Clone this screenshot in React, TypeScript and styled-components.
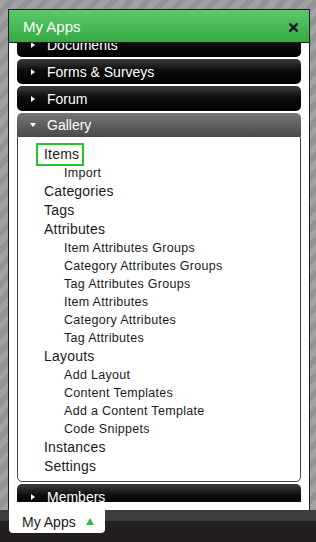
import React, { useLayoutEffect, useRef } from 'react';
import styled, { createGlobalStyle, css } from 'styled-components';

const GlobalStyle = createGlobalStyle`
  html, body {
    margin: 0;
    padding: 0;
    height: 100%;
  }
  body {
    background: repeating-linear-gradient(135deg, #a2a2a2 0 6px, #939393 6px 12px);
    font-family: 'Liberation Sans', Arial, sans-serif;
  }
  #root {
    height: 100%;
  }
`;

const Screen = styled.div`
  height: 100%;
  display: flex;
  flex-direction: column;
`;

const Stage = styled.div`
  flex: 1;
  min-height: 0;
  display: flex;
  padding: 9px 6px 0 8px;
`;

const Panel = styled.section`
  flex: 1;
  min-height: 0;
  display: flex;
  flex-direction: column;
  background: #fff;
  border: 1px solid #1e1e1e;
  border-bottom: none;
`;

const Header = styled.header`
  height: 32px;
  flex-shrink: 0;
  display: flex;
  align-items: center;
  justify-content: space-between;
  padding: 0 11px 0 14px;
  background: linear-gradient(#5dc86d, #35a944);
  border-bottom: 1px solid #1e1e1e;
  color: #fff;
  font-size: 15px;
`;

const Close = styled.button`
  display: flex;
  padding: 0;
  margin-top: 2px;
  border: none;
  background: none;
  color: #1b1b1b;
`;

const Viewport = styled.div`
  flex: 1;
  min-height: 0;
  overflow: hidden;
  padding: 0 8px;
`;

const Sections = styled.div`
  display: flex;
  flex-direction: column;
  gap: 2px;
`;

const Spacer = styled.div`
  height: 8px;
  flex-shrink: 0;
`;

const Bar = styled.div<{ $open?: boolean }>`
  height: ${p => (p.$open ? 23 : 25)}px;
  display: flex;
  align-items: center;
  gap: 10px;
  padding-left: 12px;
  border-radius: ${p => (p.$open ? '5px 5px 0 0' : '5px')};
  background: ${p =>
    p.$open
      ? 'linear-gradient(#767676, #4b4b4b)'
      : 'linear-gradient(#3e3e3e, #0d0d0d 45%, #000)'};
  color: #fff;
  font-size: 14px;
`;

const Arrow = styled.span<{ $open?: boolean }>`
  width: 8px;
  height: 8px;
  display: flex;
  align-items: center;
  justify-content: center;
  &::before {
    content: '';
    border-style: solid;
    border-color: transparent;
    ${p =>
      p.$open
        ? css`
            border-width: 4px 3.5px 0 3.5px;
            border-top-color: #fff;
          `
        : css`
            border-width: 3.5px 0 3.5px 4px;
            border-left-color: #fff;
          `}
  }
`;

const Drawer = styled.ul`
  list-style: none;
  margin: 0;
  padding: 8px 0 5px;
  border: 1px solid #474747;
  border-radius: 0 0 5px 5px;
  color: #1a1a1a;
`;

const Entry = styled.li<{ $sub?: boolean }>`
  padding-left: ${p => (p.$sub ? 46 : 26)}px;
  font-size: ${p => (p.$sub ? 12.5 : 14)}px;
  line-height: ${p => (p.$sub ? 18 : 19)}px;
  letter-spacing: ${p => (p.$sub ? 0.3 : 0.2)}px;
  white-space: nowrap;
`;

const Label = styled.span<{ $selected?: boolean }>`
  ${p =>
    p.$selected &&
    css`
      display: inline-block;
      vertical-align: top;
      margin-left: -6px;
      padding: 0 3px 0 6px;
      outline: 2px solid #2cc12a;
    `}
`;

const Taskbar = styled.footer`
  height: 32px;
  flex-shrink: 0;
  padding-left: 9px;
  background: linear-gradient(#3d3d3d 0 11px, #231f20 11px);
`;

const Tab = styled.button`
  width: 96px;
  height: 23px;
  display: flex;
  align-items: center;
  gap: 10px;
  padding: 0 0 0 13px;
  border: none;
  border-radius: 0 0 4px 4px;
  background: #fff;
  color: #1c1c1c;
  font: 14px 'Liberation Sans', Arial, sans-serif;
`;

const UpArrow = styled.span`
  width: 0;
  height: 0;
  border-style: solid;
  border-color: transparent transparent #3bb54a transparent;
  border-width: 0 4px 7px 4px;
`;

const closedBefore = ['Documents', 'Forms & Surveys', 'Forum'];
const closedAfter = ['Members'];

const galleryLinks: { label: string; sub?: boolean; selected?: boolean }[] = [
  { label: 'Items', selected: true },
  { label: 'Import', sub: true },
  { label: 'Categories' },
  { label: 'Tags' },
  { label: 'Attributes' },
  { label: 'Item Attributes Groups', sub: true },
  { label: 'Category Attributes Groups', sub: true },
  { label: 'Tag Attributes Groups', sub: true },
  { label: 'Item Attributes', sub: true },
  { label: 'Category Attributes', sub: true },
  { label: 'Tag Attributes', sub: true },
  { label: 'Layouts' },
  { label: 'Add Layout', sub: true },
  { label: 'Content Templates', sub: true },
  { label: 'Add a Content Template', sub: true },
  { label: 'Code Snippets', sub: true },
  { label: 'Instances' },
  { label: 'Settings' },
];

const App: React.FC = () => {
  const viewport = useRef<HTMLDivElement>(null);

  // the list is scrolled a little, Documents is half hidden under the header
  useLayoutEffect(() => {
    if (viewport.current) viewport.current.scrollTop = 11;
  }, []);

  return (
    <Screen>
      <GlobalStyle />
      <Stage>
        <Panel>
          <Header>
            My Apps
            <Close aria-label="Close">
              <svg width="9" height="9" viewBox="0 0 9 9">
                <path d="M1.3 1.3 L7.7 7.7 M7.7 1.3 L1.3 7.7" stroke="currentColor" strokeWidth="2.4" strokeLinecap="square" />
              </svg>
            </Close>
          </Header>
          <Viewport ref={viewport}>
            <Sections>
              {closedBefore.map(name => (
                <Bar key={name}>
                  <Arrow />
                  {name}
                </Bar>
              ))}
              <div>
                <Bar $open>
                  <Arrow $open />
                  Gallery
                </Bar>
                <Drawer>
                  {galleryLinks.map(link => (
                    <Entry key={link.label} $sub={link.sub}>
                      <Label $selected={link.selected}>{link.label}</Label>
                    </Entry>
                  ))}
                </Drawer>
              </div>
              {closedAfter.map(name => (
                <Bar key={name}>
                  <Arrow />
                  {name}
                </Bar>
              ))}
            </Sections>
          </Viewport>
          <Spacer />
        </Panel>
      </Stage>
      <Taskbar>
        <Tab>
          My Apps
          <UpArrow />
        </Tab>
      </Taskbar>
    </Screen>
  );
};

export default App;
